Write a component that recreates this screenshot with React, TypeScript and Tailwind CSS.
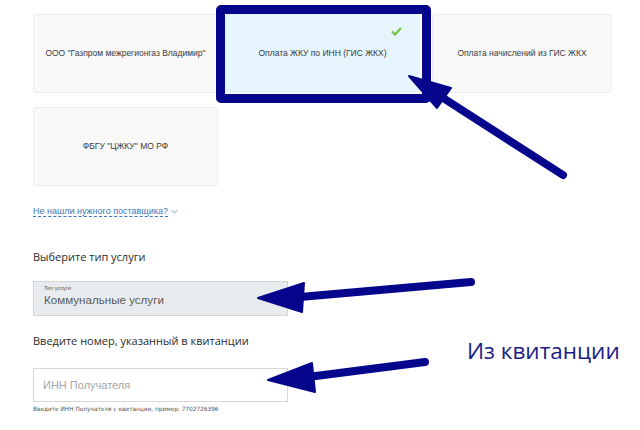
import React from "react";

const cardBase =
  "h-[79px] rounded-[3px] border border-[#ececec] bg-[#f9f9f9] flex items-center justify-center text-[8.5px] text-[#3a3a3a] leading-none";

export default function App() {
  return (
    <div
      className="relative w-[640px] h-[430px] overflow-hidden bg-white"
      style={{ fontFamily: '"Liberation Sans", Arial, sans-serif' }}
    >
      <div className="pt-[14px] pl-[33px] flex flex-col">
        <div className="flex">
          <div className={`${cardBase} w-[185px]`}>ООО "Газпром межрегионгаз Владимир"</div>
          <div className="relative ml-[7px] w-[195px] h-[79px] rounded-[3px] bg-[#e5f4fd] flex items-center justify-center text-[8.5px] text-[#3a3a3a] leading-none">
            Оплата ЖКУ по ИНН (ГИС ЖКХ)
            <svg className="absolute left-[166px] top-[13px]" width="11" height="9" viewBox="0 0 11 9">
              <path d="M1 4.5 L4 7.5 L10 1" fill="none" stroke="#78c043" strokeWidth="2.2" />
            </svg>
          </div>
          <div className={`${cardBase} ml-[12px] w-[180px]`}>Оплата начислений из ГИС ЖКХ</div>
        </div>
        <div className="flex mt-[14px]">
          <div className={`${cardBase} w-[185px]`}>ФБГУ "ЦЖКУ" МО РФ</div>
        </div>

        <div className="mt-[19px] flex items-center h-[12px] text-[9px] text-[#3b78b8]">
          <span className="border-b border-dashed border-[#3b78b8] leading-[10px]">Не нашли нужного поставщика?</span>
          <svg className="ml-[3px]" width="7" height="5" viewBox="0 0 7 5">
            <path d="M0.5 1 L3.5 4 L6.5 1" fill="none" stroke="#6a9ad0" strokeWidth="0.9" />
          </svg>
        </div>

        <div
          className="mt-[32px] h-[16px] leading-[16px] text-[11px] text-[#2b2b2b]"
          style={{ fontFamily: '"Open Sans", "Noto Sans", sans-serif' }}
        >
          Выберите тип услуги
        </div>

        <div className="mt-[16px] w-[255px] h-[35px] border border-[#d3d6d9] bg-[#e9ecef] pl-[10px] pt-[3px] flex flex-col">
          <span className="text-[5.5px] leading-[7px] text-[#555]">Тип услуги</span>
          <span className="text-[11.6px] leading-[16px] text-[#5a5a5a]">Коммунальные услуги</span>
        </div>

        <div
          className="mt-[17px] h-[16px] leading-[16px] text-[11px] text-[#2b2b2b]"
          style={{ fontFamily: '"Open Sans", "Noto Sans", sans-serif' }}
        >
          Введите номер, указанный в квитанции
        </div>

        <div className="mt-[19px] w-[255px] h-[34px] border border-[#d6d6d6] bg-white pl-[9px] flex items-center">
          <span className="text-[11px] text-[#a6a6a6]">ИНН Получателя</span>
        </div>

        <div
          className="mt-[3px] text-[5.8px] leading-[9px] text-[#555]"
          style={{ fontFamily: '"DejaVu Sans", Verdana, sans-serif' }}
        >
          Введите ИНН Получателя с квитанции, пример: 7702726396
        </div>
      </div>

      {/* Annotation frame */}
      <div className="absolute left-[216px] top-[5px] w-[215px] h-[98px] border-[9px] border-[#06068c] rounded-[5px]" />

      {/* Annotation text */}
      <div
        className="absolute left-[467px] top-[337px] text-[22.5px] leading-[28px] text-[#1c1c86]"
        style={{ fontFamily: '"Open Sans", "Noto Sans", sans-serif' }}
      >
        Из квитанции
      </div>

      {/* Annotation arrows */}
      <svg className="absolute left-0 top-0" width="640" height="430" viewBox="0 0 640 430">
        <g fill="#06068c" stroke="#06068c" strokeLinecap="round" strokeLinejoin="round">
          <line x1="563" y1="175" x2="440" y2="96" strokeWidth="8" />
          <polygon points="409,76 451,88 437,108" strokeWidth="2" />
          <line x1="471" y1="282" x2="300" y2="297" strokeWidth="8" />
          <polygon points="258,298 304,283 302,312" strokeWidth="2" />
          <line x1="425" y1="362" x2="308" y2="377" strokeWidth="8" />
          <polygon points="268,380 312,363 315,392" strokeWidth="2" />
        </g>
      </svg>
    </div>
  );
}
